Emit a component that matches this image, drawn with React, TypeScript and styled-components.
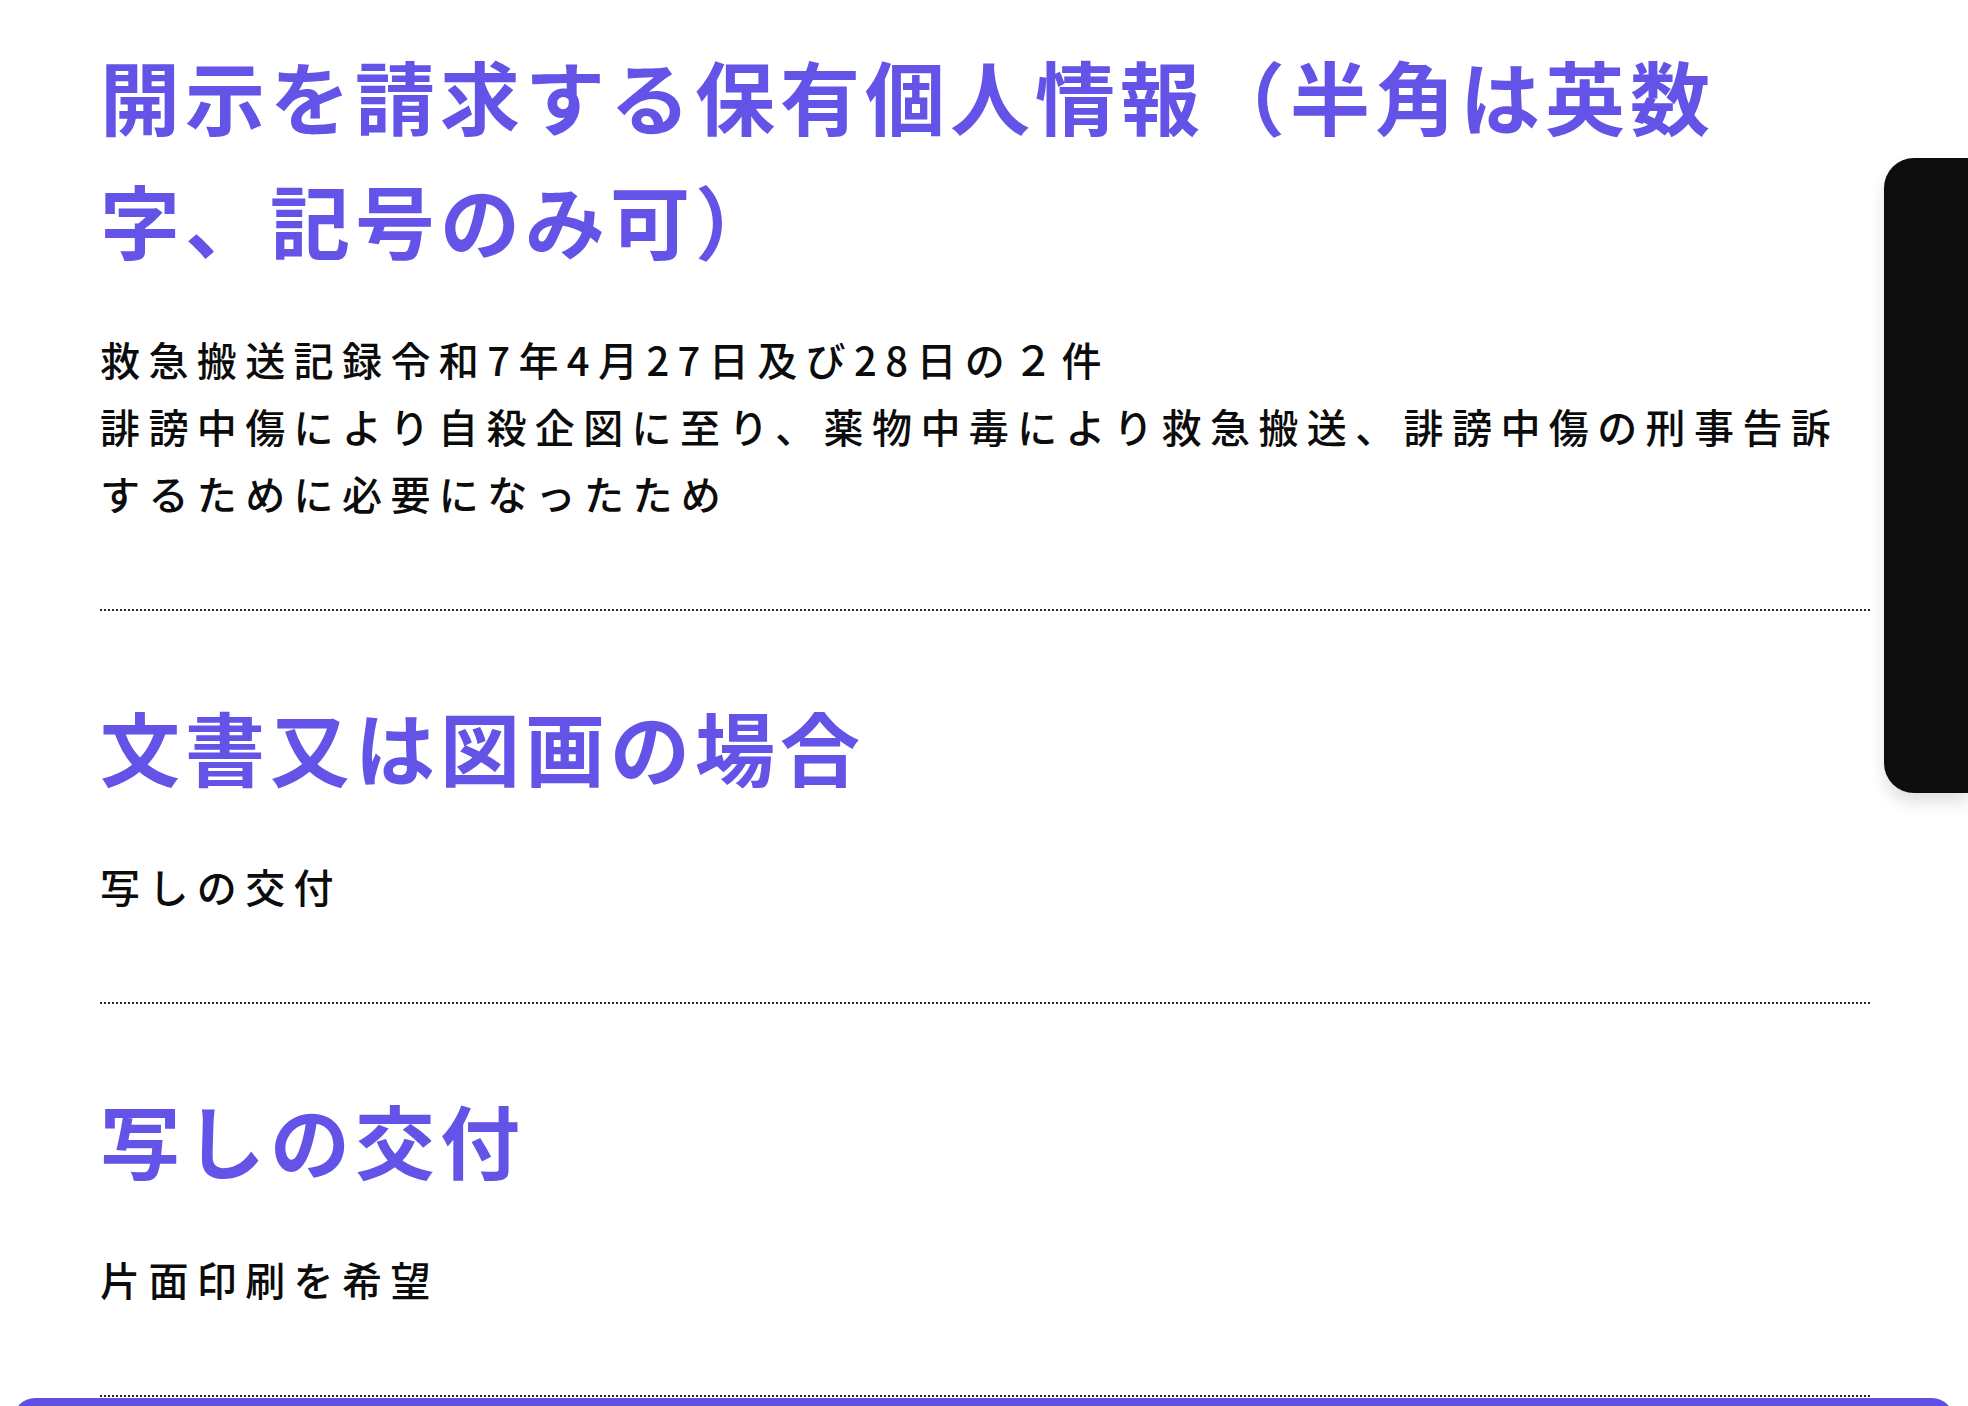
import React from "react";
import styled, { createGlobalStyle } from "styled-components";

const GlobalStyle = createGlobalStyle`
  html, body {
    margin: 0;
    padding: 0;
    background: #ffffff;
  }
  body {
    font-family: "Noto Sans CJK JP", "Noto Sans", sans-serif;
    color: #111111;
  }
`;

const Page = styled.main`
  padding: 0 98px 0 100px;
`;

const Section = styled.section<{ $first?: boolean }>`
  padding: ${(p) => (p.$first ? "32px" : "72px")} 0 82px;
  border-bottom: 2px dotted #2a2a2a;
`;

const Heading = styled.h2`
  margin: 0 0 46px;
  max-width: 1640px;
  font-family: "Noto Sans CJK JP", "Noto Sans", sans-serif;
  font-weight: 700;
  font-size: 80px;
  line-height: 124px;
  letter-spacing: 5px;
  color: #6353e6;
`;

const Body = styled.p`
  margin: 0;
  font-family: "Noto Sans CJK JP", "Noto Sans", sans-serif;
  font-weight: 500;
  font-size: 40px;
  line-height: 67px;
  letter-spacing: 8.4px;
  color: #0c0c0c;
`;

const SideTab = styled.div`
  position: fixed;
  top: 158px;
  right: 0;
  width: 84px;
  height: 635px;
  background: #0d0d0d;
  border-radius: 30px 0 0 30px;
  box-shadow: 0 10px 16px rgba(0, 0, 0, 0.12);
`;

const BottomBar = styled.div`
  position: fixed;
  left: 13px;
  right: 14px;
  bottom: -60px;
  height: 68px;
  background: #5f4fe2;
  border-radius: 22px;
`;

const sections = [
  {
    title: "開示を請求する保有個人情報（半角は英数字、記号のみ可）",
    body: [
      "救急搬送記録令和7年4月27日及び28日の２件",
      "誹謗中傷により自殺企図に至り、薬物中毒により救急搬送、誹謗中傷の刑事告訴するために必要になったため",
    ],
  },
  { title: "文書又は図画の場合", body: ["写しの交付"] },
  { title: "写しの交付", body: ["片面印刷を希望"] },
];

export default function App() {
  return (
    <>
      <GlobalStyle />
      <Page>
        {sections.map((s, i) => (
          <Section key={i} $first={i === 0}>
            <Heading>{s.title}</Heading>
            <Body>
              {s.body.map((line, j) => (
                <React.Fragment key={j}>
                  {j > 0 && <br />}
                  {line}
                </React.Fragment>
              ))}
            </Body>
          </Section>
        ))}
      </Page>
      <SideTab />
      <BottomBar />
    </>
  );
}
